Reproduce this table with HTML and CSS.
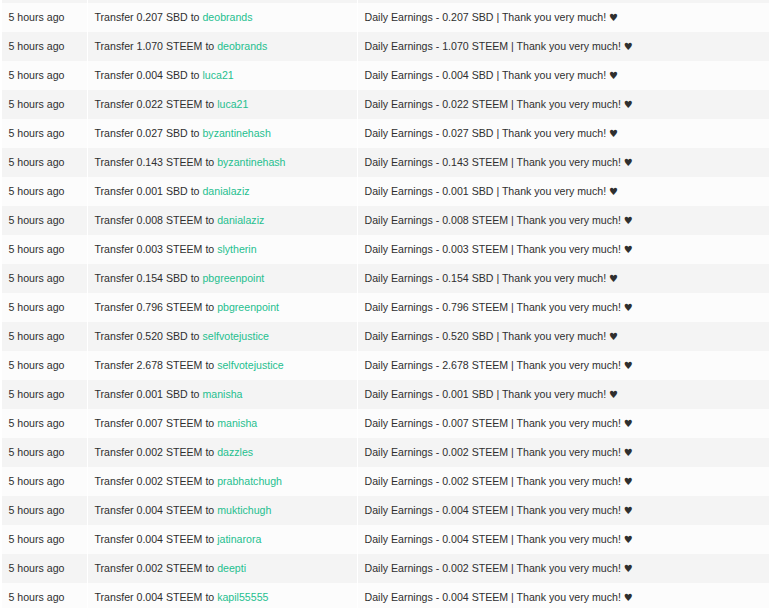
FILE: index.html
```html
<!DOCTYPE html>
<html>
<head>
<meta charset="utf-8">
<link rel="stylesheet" href="styles.css">
</head>
<body>
<div class="viewport">
<table class="history">
<colgroup><col class="c-time"><col class="c-op"><col class="c-memo"></colgroup>
<tbody>
<tr class="spacer"><td></td><td></td><td></td></tr>
<tr><td>5 hours ago</td><td>Transfer 0.207 SBD to <a href="#">deobrands</a></td><td>Daily Earnings - 0.207 SBD | Thank you very much! <span class="heart">♥</span></td></tr>
<tr><td>5 hours ago</td><td>Transfer 1.070 STEEM to <a href="#">deobrands</a></td><td>Daily Earnings - 1.070 STEEM | Thank you very much! <span class="heart">♥</span></td></tr>
<tr><td>5 hours ago</td><td>Transfer 0.004 SBD to <a href="#">luca21</a></td><td>Daily Earnings - 0.004 SBD | Thank you very much! <span class="heart">♥</span></td></tr>
<tr><td>5 hours ago</td><td>Transfer 0.022 STEEM to <a href="#">luca21</a></td><td>Daily Earnings - 0.022 STEEM | Thank you very much! <span class="heart">♥</span></td></tr>
<tr><td>5 hours ago</td><td>Transfer 0.027 SBD to <a href="#">byzantinehash</a></td><td>Daily Earnings - 0.027 SBD | Thank you very much! <span class="heart">♥</span></td></tr>
<tr><td>5 hours ago</td><td>Transfer 0.143 STEEM to <a href="#">byzantinehash</a></td><td>Daily Earnings - 0.143 STEEM | Thank you very much! <span class="heart">♥</span></td></tr>
<tr><td>5 hours ago</td><td>Transfer 0.001 SBD to <a href="#">danialaziz</a></td><td>Daily Earnings - 0.001 SBD | Thank you very much! <span class="heart">♥</span></td></tr>
<tr><td>5 hours ago</td><td>Transfer 0.008 STEEM to <a href="#">danialaziz</a></td><td>Daily Earnings - 0.008 STEEM | Thank you very much! <span class="heart">♥</span></td></tr>
<tr><td>5 hours ago</td><td>Transfer 0.003 STEEM to <a href="#">slytherin</a></td><td>Daily Earnings - 0.003 STEEM | Thank you very much! <span class="heart">♥</span></td></tr>
<tr><td>5 hours ago</td><td>Transfer 0.154 SBD to <a href="#">pbgreenpoint</a></td><td>Daily Earnings - 0.154 SBD | Thank you very much! <span class="heart">♥</span></td></tr>
<tr><td>5 hours ago</td><td>Transfer 0.796 STEEM to <a href="#">pbgreenpoint</a></td><td>Daily Earnings - 0.796 STEEM | Thank you very much! <span class="heart">♥</span></td></tr>
<tr><td>5 hours ago</td><td>Transfer 0.520 SBD to <a href="#">selfvotejustice</a></td><td>Daily Earnings - 0.520 SBD | Thank you very much! <span class="heart">♥</span></td></tr>
<tr><td>5 hours ago</td><td>Transfer 2.678 STEEM to <a href="#">selfvotejustice</a></td><td>Daily Earnings - 2.678 STEEM | Thank you very much! <span class="heart">♥</span></td></tr>
<tr><td>5 hours ago</td><td>Transfer 0.001 SBD to <a href="#">manisha</a></td><td>Daily Earnings - 0.001 SBD | Thank you very much! <span class="heart">♥</span></td></tr>
<tr><td>5 hours ago</td><td>Transfer 0.007 STEEM to <a href="#">manisha</a></td><td>Daily Earnings - 0.007 STEEM | Thank you very much! <span class="heart">♥</span></td></tr>
<tr><td>5 hours ago</td><td>Transfer 0.002 STEEM to <a href="#">dazzles</a></td><td>Daily Earnings - 0.002 STEEM | Thank you very much! <span class="heart">♥</span></td></tr>
<tr><td>5 hours ago</td><td>Transfer 0.002 STEEM to <a href="#">prabhatchugh</a></td><td>Daily Earnings - 0.002 STEEM | Thank you very much! <span class="heart">♥</span></td></tr>
<tr><td>5 hours ago</td><td>Transfer 0.004 STEEM to <a href="#">muktichugh</a></td><td>Daily Earnings - 0.004 STEEM | Thank you very much! <span class="heart">♥</span></td></tr>
<tr><td>5 hours ago</td><td>Transfer 0.004 STEEM to <a href="#">jatinarora</a></td><td>Daily Earnings - 0.004 STEEM | Thank you very much! <span class="heart">♥</span></td></tr>
<tr><td>5 hours ago</td><td>Transfer 0.002 STEEM to <a href="#">deepti</a></td><td>Daily Earnings - 0.002 STEEM | Thank you very much! <span class="heart">♥</span></td></tr>
<tr><td>5 hours ago</td><td>Transfer 0.004 STEEM to <a href="#">kapil55555</a></td><td>Daily Earnings - 0.004 STEEM | Thank you very much! <span class="heart">♥</span></td></tr>
</tbody>
</table>
</div>
</body>
</html>
```
FILE: styles.css
```css
html, body {
  margin: 0;
  padding: 0;
  background: #ffffff;
  overflow: hidden;
}
.viewport {
  width: 769px;
  height: 608px;
  overflow: hidden;
  padding-left: 2px;
  box-sizing: border-box;
}
.history {
  width: 1000px;
  table-layout: fixed;
  border-collapse: separate;
  border-spacing: 0;
  font-family: "Liberation Sans", Arial, sans-serif;
  font-size: 10.6px;
  color: #2f2f2f;
}
.c-time { width: 86px; }
.c-op { width: 270px; }
.c-memo { width: 644px; }
.history td {
  height: 29px;
  padding: 0 6px 0 6.5px;
  box-sizing: border-box;
  border-right: 1px solid #ffffff;
  white-space: nowrap;
  vertical-align: middle;
  line-height: 13px;
}
.history tr.spacer td {
  height: 3px;
  padding: 0;
  line-height: 0;
}
.history tr:nth-child(odd) td { background: #f4f4f4; }
.history tr:nth-child(even) td { background: #fcfcfc; }
.history a {
  color: #1fbf8f;
  text-decoration: none;
}
.heart {
  font-family: "DejaVu Sans", sans-serif;
  font-size: 10px;
  line-height: 13px;
}
```
